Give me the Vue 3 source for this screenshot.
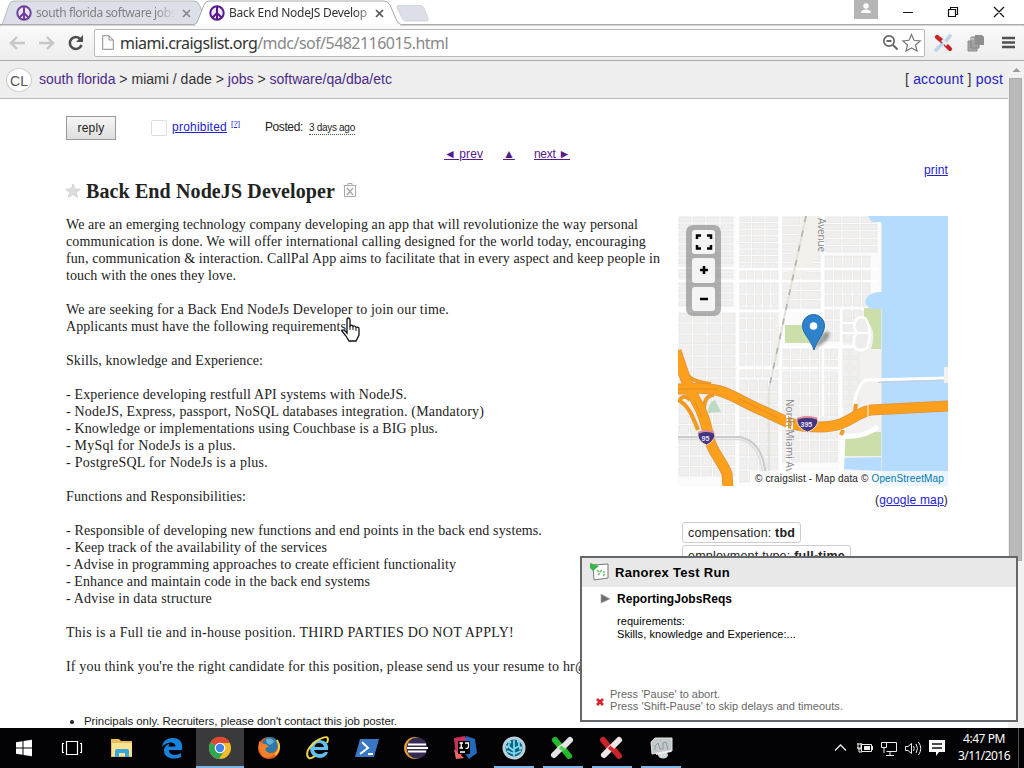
<script setup>
// Tunes letter-spacing so a run of text occupies a given width.
const vFit = {
  mounted(el, { value }) {
    const natural = el.getBoundingClientRect().width
    el.style.letterSpacing = (value - natural) / el.textContent.length + 'px'
  }
}

const lines = [
  ['We are an emerging technology company developing an app that will revolutionize the way personal', 572],
  ['communication is done. We will offer international calling designed for the world today, encouraging', 580],
  ['fun, communication & interaction. CallPal App aims to facilitate that in every aspect and keep people in', 594],
  ['touch with the ones they love.', 170],
  null,
  ['We are seeking for a Back End NodeJs Developer to join our time.', 383],
  ['Applicants must have the following requirements:', 284],
  null,
  ['Skills, knowledge and Experience:', 197],
  null,
  ['- Experience developing restfull API systems with NodeJS.', 341],
  ['- NodeJS, Express, passport, NoSQL databases integration. (Mandatory)', 418],
  ['- Knowledge or implementations using Couchbase is a BIG plus.', 372],
  ['- MySql for NodeJs is a plus.', 170],
  ['- PostgreSQL for NodeJs is a plus.', 202],
  null,
  ['Functions and Responsibilities:', 180],
  null,
  ['- Responsible of developing new functions and end points in the back end systems.', 476],
  ['- Keep track of the availability of the services', 261],
  ['- Advise in programming approaches to create efficient functionality', 390],
  ['- Enhance and maintain code in the back end systems', 304],
  ['- Advise in data structure', 146],
  null,
  ['This is a Full tie and in-house position. THIRD PARTIES DO NOT APPLY!', 448],
  null,
  ["If you think you're the right candidate for this position, please send us your resume to hr@", 522]
]

// City-block zones: [x, y, width, height, column pitch, row pitch]
const zones = [
  [1, 1, 58, 92, 14, 7], [61, 1, 41, 53, 13.5, 6.6], [61, 55, 41, 108, 8.2, 12],
  [1, 97, 58, 80, 14.5, 11], [1, 178, 58, 90, 11.5, 10.5], [61, 164, 41, 104, 10.2, 13],
  [104, 1, 40, 94, 20, 9.3], [147, 1, 54, 38, 18, 7.4], [147, 40, 54, 52, 9.4, 13],
  [147, 94, 38, 34, 9.5, 11], [104, 133, 58, 122, 9.6, 11.5], [163, 133, 20, 62, 10, 10]
]
const blocks = zones.flatMap(([x, y, w, h, px, py]) => {
  const cells = []
  for (let r = 0; r < Math.floor(h / py); r++)
    for (let c = 0; c < Math.floor(w / px); c++) cells.push([x + c * px, y + r * py, px - 2, py - 2])
  return cells
})
</script>

<template>
  <div class="screen">
    <header class="tabs">
      <svg class="tab-shapes" width="1024" height="26" viewBox="0 0 1024 26">
        <path d="M2 25 9 5Q10.500 1 14 1H194Q198 1 200 6L206 24" fill="#dcdfe7" stroke="#b8babf" />
        <path d="M0 24.500H194Q196.500 24.500 198 20L204 5Q205.500 1 209 1H384Q388 1 390 5L396 19Q398 24.500 401 24.500H1024V26H0Z" fill="#fff" stroke="#aaa" />
        <path d="M196 25.500H400" stroke="#fafafa" stroke-width="2" />
        <path d="M399 5.500H420Q423 5.500 424 8L428 18Q429 21 426 21H406Q403 21 402 18L397 8Q396 5.500 399 5.500Z" fill="#dcdfe7" stroke="#d3d5dc" />
        <rect x="854" width="24" height="19" fill="#b5b5b5" />
        <circle cx="866" cy="6" r="2.700" fill="#fff" /><path d="M861 13Q861 9.500 866 9.500T871 13Z" fill="#fff" />
        <path d="M903 12.500H913M948.500 9.500H955.500V16.500H948.500ZM950.500 9.500V7.500H957.500V14.500H955.500M994 7 1004 17M1004 7 994 17" fill="none" stroke="#111" stroke-width="1.200" />
      </svg>
      <div class="tab first">
        <svg class="peace faded" viewBox="0 0 16 16"><circle cx="8" cy="8" r="6.700" /><path d="M8 1V15M8 8 3.300 12.700M8 8 12.700 12.700" /></svg>
        <span class="tab-title"><span v-fit="140">south florida software jobs</span></span>
        <svg class="close" viewBox="0 0 9 9"><path d="M1 1 8 8M8 1 1 8" /></svg>
      </div>
      <div class="tab second">
        <svg class="peace" viewBox="0 0 16 16"><circle cx="8" cy="8" r="6.700" /><path d="M8 1V15M8 8 3.300 12.700M8 8 12.700 12.700" /></svg>
        <span class="tab-title"><span v-fit="138">Back End NodeJS Develop</span></span>
        <svg class="close dark" viewBox="0 0 9 9"><path d="M1 1 8 8M8 1 1 8" /></svg>
      </div>
    </header>

    <div class="toolbar">
      <svg class="nav-icons" width="94" height="34" viewBox="0 0 94 34" fill="none">
        <path d="M25 17H11M17 11 11 17 17 23M39 17H53M47 11 53 17 47 23" stroke="#c6c6c6" stroke-width="2.400" />
        <path d="M80.500 13.200A6 6 0 1 0 81.500 19" stroke="#4d4d4d" stroke-width="2.600" /><path d="M83 9V16H76Z" fill="#4d4d4d" />
      </svg>
      <div class="omnibox">
        <svg width="12" height="15" viewBox="0 0 12 15"><path d="M.7.700H7L11.300 5V14.300H.7ZM7 .7V5H11.300" fill="#fff" stroke="#8a8a8a" /></svg>
        <span class="url" v-fit="328">miami.craigslist.org<i>/mdc/sof/5482116015.html</i></span>
        <svg class="omni-right" width="42" height="22" viewBox="0 0 42 22" fill="none">
          <circle cx="8" cy="9" r="5.200" stroke="#666" stroke-width="1.700" /><path d="M5.500 9H10.500M12 13 16.500 17.500" stroke="#666" stroke-width="2" />
          <path d="M30.500 2.500 33 8.300 39.200 8.900 34.500 13 36 19.100 30.500 15.900 25 19.100 26.500 13 21.800 8.900 28 8.300Z" stroke="#777" stroke-width="1.200" />
        </svg>
      </div>
      <svg width="99" height="34" viewBox="925 26 99 34" fill="none">
        <path d="M936 50 941 45 945 42 950 36" stroke="#bdd4e6" stroke-width="3.600" stroke-linecap="round" />
        <path d="M937 37 942 41M946 45 950 49" stroke="#c92028" stroke-width="4.200" stroke-linecap="round" /><path d="m942 40 5 5" stroke="#e8eef3" stroke-width="3" />
        <path d="M968 41H977V51H968Z" fill="#a5a5a5" stroke="#8e8e8e" /><path d="M971 37H979V48H971Z" fill="#a2a2a2" stroke="#858585" /><path d="M975 35H982L984 37V45H975Z" fill="#8f8f8f" /><path d="M970 37.500H974V40H970Z" fill="#bbb" />
        <path d="M1002 38H1015M1002 42.500H1015M1002 47H1015" stroke="#505050" stroke-width="2.700" />
      </svg>
    </div>

    <div class="viewport">
      <div class="page">
        <div class="crumbs">
          <span class="logo">CL</span>
          <span class="trail"><span v-fit="353"><a>south florida</a> &gt; miami / dade &gt; <a>jobs</a> &gt; <a>software/qa/dba/etc</a></span></span>
          <span class="acct"><span v-fit="98">[ <b>account</b> ] <b>post</b></span></span>
        </div>

        <main class="content">
          <div class="actions">
            <button class="reply"><span v-fit="27">reply</span></button>
            <span class="flag"></span>
            <a class="blue prohibited"><span v-fit="55">prohibited</span></a><a class="blue help">[?]</a>
            <span class="posted"><span v-fit="38">Posted:</span></span>
            <time><span v-fit="46">3 days ago</span></time>
          </div>
          <nav class="pager"><a class="prev"><span v-fit="39">◄ prev</span></a><a class="up">▲</a><a><span v-fit="36">next ►</span></a></nav>
          <div class="print"><a class="blue"><span v-fit="24">print</span></a></div>
          <h1>
            <svg width="16" height="16" viewBox="0 0 16 16"><path d="M8 1 10 6 15.300 6.200 11.200 9.400 12.700 14.600 8 11.600 3.300 14.600 4.800 9.400.7 6.200 6 6Z" fill="#ddd" stroke="#c8c8c8" stroke-width=".7" /></svg>
            <span v-fit="249">Back End NodeJS Developer</span>
            <svg class="trash" width="14" height="15" viewBox="0 0 14 15" fill="none" stroke="#aaa"><path d="M.5 2.500H13.500M5 2.500V.5H9V2.500M1.500 2.500V13.500H12.500V2.500" /><path d="M4 5 10 12M10 5 4 12" stroke-width="1.500" /></svg>
          </h1>
          <div class="columns">
            <section class="body">
              <div v-for="(l, i) in lines" :key="i" class="line"><span v-if="l" v-fit="l[1]">{{ l[0] }}</span></div>
              <div class="notice"><i></i><span v-fit="313">Principals only. Recruiters, please don't contact this job poster.</span></div>
            </section>
            <aside>
              <div class="map">
                <svg width="270" height="270" viewBox="0 0 270 270" fill="none">
                  <rect width="270" height="270" fill="#fbfbfb" />
                  <path d="M165 95H204V270H165Z" fill="#f2f1f0" />
                  <g stroke="#e6e5e4" fill="#f0efee" stroke-width=".7"><rect v-for="(b, i) in blocks" :key="i" :x="b[0]" :y="b[1]" :width="b[2]" :height="b[3]" /></g>
                  <path d="M111 52 125 0H141V38L121 64 106 92ZM93 125 100 96 102 130 96 165Z" fill="#f1f0ea" />
                  <path d="M60 0V270M103 0V270M145 0V200M163 92V195M0 52H60M60 53H200M0 95H140M0 65H200M104 131H184M60 152H163" stroke="#fff" stroke-width="2.500" />
                  <path d="M107 109H132V127H107ZM186 92H203V133H193Q200 112 186 103ZM165 222Q184 222 190 216H203V240H165Z" fill="#cadfa9" />
                  <path d="M30 197Q31 185 37 184L43 196Z" fill="#bdd9c4" />
                  <path d="M178 104Q183 99 188 103 195 117 189 132 181 137 176 131V121L179 117 176 111Z" fill="#ededed" stroke="#fff" stroke-width="2.500" /><path d="M165 107H176M165 117H192M165 130H178" stroke="#fff" stroke-width="2" />
                  <path d="M270 0V270H204V255L165 253V242L204 241V93H193Q184 88 189 81Q194 76 203 76V6H194L190 0Z" fill="#b5dcff" />
                  <path d="M203.500 7V76M203.500 93V270" stroke="#d9e8ef" />
                  <path d="M128 0 110 84 98 140 91 172V262" stroke="#e2e1dc" stroke-width="2" /><path d="M128 0 110 84 98 140 91 172" stroke="#b3b3ae" stroke-width="1.600" stroke-dasharray="6 9" />
                  <path d="M0 221H62Q86 226 88 262" stroke="#cbcbcb" stroke-width="2" /><path d="M0 223.500H62Q83 229 85 262" stroke="#ddd" stroke-width="1.500" />
                  <path d="M270 162 189 164H187Q178 172 176 190" stroke="#fff" stroke-width="3" /><path d="M163 265 165 220Q185 222 200 211" stroke="#fff" stroke-width="5" /><path d="M200 166.500 265 164" stroke="#c7ccd0" /><path d="M266 151H270V167H266Z" fill="#f3f1ee" />
                  <path d="M1 140C6 160 12 166 33 168M0 184C10 188 15 201 20 214M36 179Q25 179 26 198M2 183Q7 178 12 184M176 202 178 188M163 219 165 214" stroke="#f19a23" stroke-width="4" />
                  <g stroke="#db9440" stroke-width="11"><path d="M-4 173H10C45 169 55 182 83 194S113 211 142 211 175 197 193 194L270 190" /><path d="M-2 135C6 158 8 168 17 183S28 208 31 222 45 246 49 258L50 272" /></g>
                  <g stroke="#fb9f1d" stroke-width="9.500"><path d="M-4 173H10C45 169 55 182 83 194S113 211 142 211 175 197 193 194L270 190" /><path d="M-2 135C6 158 8 168 17 183S28 208 31 222 45 246 49 258L50 272" /></g>
                  <path d="M0 173H40M16 184 24 201M60 182 100 202" stroke="#dd8a20" stroke-width=".8" /><path d="M190 189V201" stroke="#fff" />
                  <path d="M109 199V270M114 199V213" stroke="#fff" stroke-width="2" />
                  <g class="street" fill="#888"><text transform="translate(140 2) rotate(90)" textLength="34">Avenue</text><text transform="translate(108 183) rotate(90)" textLength="74">North Miami Av</text></g>
                  <path d="M119 202Q129 199 139 202L140 206Q138 213 129.500 216 121 213 119 206Z" fill="#423582" stroke="#f5dcc9" /><path d="M120 202.500Q129 199.500 139 202.500" stroke="#d98a9b" stroke-width="2" />
                  <path d="M20 216Q28 213 36 216L37 220Q35 226 28.500 229 21 226 20 220Z" fill="#423582" stroke="#f5dcc9" /><path d="M21 216.500Q28 213.500 36 216.500" stroke="#d98a9b" stroke-width="2" />
                  <g class="shield" fill="#e8e2f4"><text x="122.500" y="211">395</text><text x="23.500" y="224.500">95</text></g>
                  <path class="shadow" d="M137 132Q142 114 151 116 155 122 137 133Z" fill="#444" opacity=".5" />
                  <path d="M136 134C132 122 124.500 118 124.500 109.500A11 11 0 0 1 146.500 109.500C146.500 118 140 122 136 134Z" fill="#2c83cb" stroke="#2369a4" /><circle cx="135.500" cy="110" r="3.800" fill="#fff" />
                </svg>
                <div class="controls">
                  <span><svg width="18" height="16" viewBox="0 0 18 16"><path d="M2 5V1.500H6M12 1.500H16V5M16 11V14.500H12M6 14.500H2V11" /></svg></span>
                  <span><svg width="10" height="10" viewBox="0 0 10 10"><path d="M1 5H9M5 1V9" /></svg></span>
                  <span><svg width="10" height="10" viewBox="0 0 10 10"><path d="M1 5H9" /></svg></span>
                </div>
                <div class="credit"><span v-fit="189">© craigslist - Map data © <a>OpenStreetMap</a></span></div>
              </div>
              <div class="gmap"><span v-fit="73">(<a class="blue">google map</a>)</span></div>
              <div class="attr"><span v-fit="107">compensation: <b>tbd</b></span></div>
              <div class="attr"><span v-fit="157">employment type: <b>full-time</b></span></div>
            </aside>
          </div>
        </main>
      </div>
      <div class="scrollbar"><svg width="15" height="17" viewBox="0 0 15 17"><path d="M3.500 11 7.500 7 11.500 11Z" fill="#999" /></svg><div class="thumb"></div></div>
    </div>

    <footer class="taskbar">
      <svg width="820" height="40" viewBox="0 728 820 40" fill="none">
        <path d="M196 728H244V768H196Z" fill="#3a3a3c" /><path d="M196 766H244V768H196ZM494 766H534V768H494ZM543 766H583V768H543ZM592 766H632V768H592ZM641 766H681V768H641Z" fill="#81b5e3" />
        <path d="M16 742.200 22.500 741.200V747.500H16ZM23.500 741 32 739.800V747.500H23.500ZM16 748.500H22.500V754.800L16 753.800ZM23.500 748.500H32V756.200L23.500 755Z" fill="#fff" />
        <path d="M66.500 741.500H77.500V754.500H66.500ZM64 743.500H62.500V752.500H64M80 743.500H81.500V752.500H80" stroke="#fff" stroke-width="1.200" />
        <path d="M111 739H119L121 741H132V757H111Z" fill="#e8bd55" /><path d="M112 743H132V756H112Z" fill="#fbe391" /><path d="M115 757V751Q115 749 117 749H127Q129 749 129 751V757H125V753H119V757Z" fill="#35a7dc" />
        <path d="M162 747C163 740 168 738 173 738 181 738 183 744 182 750H169C169 756 177 756 181 753V757C172 761 164 757 164 751 164 746 168 744 170 743.500 169 744 168.500 746 168.500 746.500H175.500C175.500 741 167 741 162 747Z" fill="#1683df" />
        <circle cx="220" cy="748" r="11" fill="#efbd2b" /><path d="M220 748 210.500 742.500A11 11 0 0 1 230 743H220Z" fill="#df4837" /><path d="M210.500 742.500A11 11 0 0 0 219 759L224.500 750.500 220 748Z" fill="#30a653" /><circle cx="220" cy="748" r="5.300" fill="#fff" /><circle cx="220" cy="748" r="4.200" fill="#4284ef" />
        <circle cx="269" cy="748" r="11" fill="#e35a21" /><circle cx="270" cy="745" r="8" fill="#2d78ab" /><path d="M266 739Q272 737 274 742L270 745Q266 744 266 739Z" fill="#64b1d4" /><path d="M259 741Q263 745 266 744L269 747Q264 747 266 751 270 755 276 752 272 759 264 757 258 753 259 741Z" fill="#ef8129" /><path d="M277 740Q282 748 275 755" stroke="#f7c83a" stroke-width="2" />
        <path d="M325 750H314Q315 754 320 754 323 754 325 752H328Q326 758 319 758 310 757 310 748 311 740 319 740 329 740 328 750ZM314.500 747H324Q323 743 319 743 315 743 314.500 747Z" fill="#60bff0" /><path d="M327 743Q331 733 318 740 304 750 308 757 309 760 315 756" stroke="#f1d546" stroke-width="2" />
        <path d="M360 739H379L374 757H355Z" fill="#3977c4" /><path d="M362 742 368 748 360 754M368 754H373" stroke="#fff" stroke-width="2" />
        <circle cx="415" cy="748" r="11" fill="#e59b38" /><circle cx="417" cy="748" r="10.500" fill="#342b55" /><path d="M408 744.500H426M407 748H428M408 751.500H426" stroke="#fff" stroke-width="1.800" />
        <path d="M454 738 465 736 471 749 456 758Z" fill="#cc3059" /><path d="M466 736 475 739 477 753 469 759 463 751Z" fill="#236abd" /><path d="M454 749 464 758 456 759Z" fill="#ee6961" /><path d="M458 741H470V754H458Z" fill="#000" /><path d="M459.500 743H463M461.250 743V748M459.500 748H463M465 743H468.500V746.500Q468 749 465.500 748M460 752H465" stroke="#fff" stroke-width="1.300" />
        <circle cx="514" cy="748" r="10" fill="#126282" stroke="#bdd1dd" stroke-width="3" /><path d="M514 756V740M514 751 509 747V744M514 749 519 746V742M514 754 507 751M514 754 521 751" stroke="#7bdef0" stroke-width="1.700" /><path d="M508 742H511M517 741H519M506 747H508M519 748H522" stroke="#7bdef0" stroke-width="3" />
        <g stroke-linecap="round" stroke-width="6"><path d="m555 740 5 6M565 751 569 756" stroke="#27b92d" /><path d="M554 755 560 749 564 746 570 740" stroke="#e7e2e9" /><path d="m603 740 5 6M615 751 619 756" stroke="#c9242a" /><path d="M604 755 610 749 613 746 619 740" stroke="#eee6e7" /></g>
        <path d="M560 747 564 750" stroke="#4ed34f" stroke-width="4" /><path d="M609 747 614 751" stroke="#d42d30" stroke-width="4" />
        <path d="M651 742 655 738H672V751L652 754Z" fill="#c3c8ca" stroke="#e1e5e6" /><path d="M655 750V746L658 743 660 749H663V743L666 742 668 750" stroke="#8b9aa2" /><ellipse cx="663" cy="755" rx="5" ry="3.500" fill="#d5dadd" /><path d="M656 754 671 751" stroke="#eee" stroke-width="2" />
      </svg>
      <svg width="130" height="40" viewBox="820 728 130 40" fill="none">
        <path d="M835 750.500 840.500 745 846 750.500" stroke="#eee" stroke-width="1.300" />
        <path d="M861.500 744.500H871.500V751.500H861.500Z" stroke="#eee" /><path d="M864 746H870V750H864ZM872 746H873V750H872Z" fill="#eee" /><path d="M857 744H862M857 748H862M858 743V749H861V743M859 749V752H862" stroke="#eee" />
        <path d="M884.500 742.500H896.500V751.500H886.500M890 752V755M886 755.500H894M881.500 742.500H886.500V747.500H881.500ZM884 748V753" stroke="#eee" />
        <path d="M905.500 746.500H908L911.500 743.500V753.500L908 750.500H905.500ZM913.500 746Q915 748.500 913.500 751M916 744Q919 748.500 916 753M918.500 742Q923 748.500 918.500 755" stroke="#eee" />
        <path d="M929 740H945V752H939L936 756V752H929Z" fill="#fff" /><path d="M932 744H942M932 748H942" stroke="#111" stroke-width="1.300" />
      </svg>
      <div class="clock"><div><span v-fit="42">4:47 PM</span></div><div><span v-fit="52">3/11/2016</span></div></div>
      <div class="desk"></div>
    </footer>

    <section class="ranorex">
      <div class="rx-head">
        <svg width="20" height="19" viewBox="0 0 20 19"><path d="M3 3 18 2V16L4 18Z" fill="#fff" stroke="#777" /><path d="M0 1 9 4 3 9 0 6Z" fill="#38b649" /><path d="M7 8 9 10M12 8 10 10M8 13 10 11M13 14 15 12M13 10H15" stroke="#70bd78" stroke-width="1.500" /></svg>
        <span v-fit="115">Ranorex Test Run</span>
      </div>
      <div class="rx-body">
        <div class="rx-step"><svg width="10" height="10" viewBox="0 0 10 10"><path d="M1 0 10 5 1 9Z" fill="#6f6f6f" stroke="#aaa" stroke-width=".7" /></svg><span v-fit="115">ReportingJobsReqs</span></div>
        <div class="rx-text"><div><span v-fit="68">requirements:</span></div><div><span v-fit="179">Skills, knowledge and Experience:...</span></div></div>
        <div class="rx-foot"><svg width="8" height="8" viewBox="0 0 8 8"><path d="M1 1 7 7M7 1 1 7" stroke="#cf2630" stroke-width="2.800" /></svg><div><div><span v-fit="110">Press 'Pause' to abort.</span></div><div><span v-fit="233">Press 'Shift-Pause' to skip delays and timeouts.</span></div></div></div>
      </div>
    </section>
    <svg class="cursor" width="20" height="26" viewBox="0 0 20 26"><path d="M6 14V3Q6 1 7.500 1T9 3V9Q11 7 12 9.500 14 8 15 10.500 18 9.500 18 12V18L15 24H8L5 19 1 14Q2 11 6 16Z" fill="#fff" stroke="#111" stroke-width="1.300" /><path d="M9 9V13M12 9.500V13M15 11V14" stroke="#111" /></svg>
  </div>
</template>

<style>
html, body { margin: 0; overflow: hidden; }
</style>

<style scoped>
* { box-sizing: border-box; }
svg { display: block; flex: none; }
.screen { position: relative; width: 1024px; height: 768px; overflow: hidden; display: flex; flex-direction: column; background: #fff; font-family: "Liberation Sans", Arial, sans-serif; color: #222; white-space: nowrap; }
.tabs { position: relative; height: 26px; flex: none; display: flex; font: 12px/24px "Noto Sans", sans-serif; }
.tab-shapes { position: absolute; left: 0; top: 0; }
.tab { position: relative; display: flex; align-items: center; height: 26px; }
.first { margin-left: 16px; color: #808080; width: 193px; }
.second { color: #333; }
.tab-title { width: 140px; margin-left: 4px; overflow: hidden; mask-image: linear-gradient(90deg, #000 85%, transparent); }
.second .tab-title { width: 139px; mask-image: linear-gradient(90deg, #000 91%, #0006); }
.peace { width: 16px; height: 16px; fill: #f2e7fa; stroke: #551a8b; stroke-width: 2; }
.faded { opacity: .8; }
.close { width: 9px; height: 9px; margin-left: 6px; stroke: #888; stroke-width: 1.700; }
.close.dark { stroke: #555; margin-left: 7px; }
.toolbar { height: 35px; flex: none; display: flex; background: linear-gradient(#fafafa, #ededed); border-bottom: 1px solid #aaa; }
.omnibox { width: 831px; height: 28px; margin-top: 3px; border: 1px solid #b9b9b9; border-radius: 2px; background: #fff; display: flex; align-items: center; padding: 0 0 2px 7px; }
.url { margin-left: 6px; font: 16px/24px "Noto Sans", sans-serif; color: #333; padding-top: 1px; }
.url i { font-style: normal; color: #888; }
.omni-right { margin: 2px 1px 0 auto; }
.viewport { height: 667px; flex: none; display: flex; overflow: hidden; }
.page { width: 1008px; overflow: hidden; }
.crumbs { height: 38px; background: #eee; border-bottom: 1px solid #bbb; display: flex; font-size: 14px; line-height: 36px; color: #333; padding-right: 5px; }
.logo { width: 26px; height: 24px; margin: 7px 7px 0 6px; border: 1px solid #ccc; border-radius: 50%; background: #fff; font-size: 14px; line-height: 25px; text-align: center; color: #555; }
.crumbs a { color: #4b2a8a; }
.acct { margin-left: auto; }
.acct b { font-weight: 400; color: #2222bb; }
.content { padding: 17px 0 0 66px; }
.actions { height: 24px; display: flex; align-items: center; font-size: 12px; line-height: 22px; }
.reply { width: 50px; height: 24px; padding: 0; border: 1px solid #999; border-radius: 0; background: linear-gradient(#f6f6f6, #dedede); font: 12px/20px "Liberation Sans", sans-serif; color: #222; }
.flag { width: 16px; height: 16px; margin-left: 35px; border: 1px solid #ddd; border-radius: 2px; }
.blue { color: #2222cc; text-decoration: underline; }
.prohibited { margin-left: 5px; margin-top: -3px; }
.help { font-size: 8px; margin: -8px 0 0 4px; line-height: 10px; }
.posted { margin: -3px 0 0 25px; }
time { font-size: 10px; line-height: 12px; margin: 0 0 0 6px; border-bottom: 1px dotted #555; }
.pager { height: 16px; margin: 6px 0 0 378px; display: flex; font-size: 12px; line-height: 16px; color: #551a8b; text-decoration: underline; }
.prev { width: 59px; }
.up { width: 31px; }
.print { width: 882px; height: 16px; text-align: right; font-size: 12px; line-height: 16px; }
h1 { height: 25px; margin: 0 0 0 -1px; display: flex; align-items: center; font: bold 20px/24px "Liberation Serif", serif; color: #222; }
h1 span { margin-left: 5px; }
.trash { margin-left: 8px; }
.columns { display: flex; margin-top: 13px; }
.body { width: 612px; font: 14px/17px "Liberation Serif", serif; }
.line { height: 17px; }
.notice { height: 17px; margin-top: 38px; font: 11.500px/17px "Liberation Sans", sans-serif; display: flex; align-items: center; }
.notice i { width: 4px; height: 4px; margin: 0 10px 0 4px; border-radius: 50%; background: #222; }
.map { position: relative; width: 270px; height: 270px; }
.shadow { filter: blur(1.500px); }
.controls { position: absolute; left: 8px; top: 9px; width: 35px; height: 91px; padding: 5px; border-radius: 7px; background: #858585a0; display: flex; flex-direction: column; gap: 4px; align-items: center; }
.controls span { width: 23px; height: 24.300px; border-radius: 3px; background: #f4f4f4; display: flex; align-items: center; justify-content: center; }
.controls path { fill: none; stroke: #000; stroke-width: 2.500; }
.credit { position: absolute; right: 0; bottom: 0; height: 15px; padding: 0 4px 0 5px; background: #ffffffb8; font-size: 10px; line-height: 15px; }
.credit a { color: #0078a8; }
.street { font: 10px "Open Sans", sans-serif; }
.shield { font: bold 7px "Liberation Sans", sans-serif; }
.gmap { text-align: right; font-size: 12px; line-height: 16px; margin: 6px 0 14px; }
.attr { width: max-content; height: 21px; margin: 0 0 2px 4px; padding: 0 5px; border: 1px solid #ccc; border-radius: 3px; font-size: 12.500px; line-height: 20px; }
.scrollbar { width: 16px; background: #f1f1f1; padding-left: 1px; }
.thumb { width: 13px; height: 483px; background: #bababa; border: 1px solid #aaa; }
.taskbar { height: 40px; flex: none; display: flex; background: #030305; }
.clock { width: 68px; color: #fff; text-align: center; font: 12px/17px "Noto Sans", sans-serif; padding-top: 2px; }
.desk { width: 1px; background: #555; }
.ranorex { position: absolute; left: 580px; top: 556px; width: 438px; height: 166px; border: 2px solid #64686b; background: #fff; color: #000; }
.rx-head { height: 29px; background: #e8e8e8; display: flex; align-items: center; padding-left: 8px; font-weight: bold; font-size: 13px; }
.rx-head svg { margin-top: -3px; }
.rx-head span { margin-left: 5px; }
.rx-body { font-size: 11px; line-height: 13px; }
.rx-step { height: 16px; margin-top: 4px; display: flex; align-items: center; padding-left: 18px; font-weight: bold; font-size: 12px; }
.rx-step span { margin-left: 7px; }
.rx-text { margin: 8px 0 0 35px; }
.rx-foot { display: flex; align-items: center; margin: 47px 0 0 14px; line-height: 12px; color: #666; }
.rx-foot > div { margin-left: 6px; }
.rx-foot > svg { margin-top: 3px; }
.cursor { position: absolute; left: 341px; top: 317px; }
</style>
